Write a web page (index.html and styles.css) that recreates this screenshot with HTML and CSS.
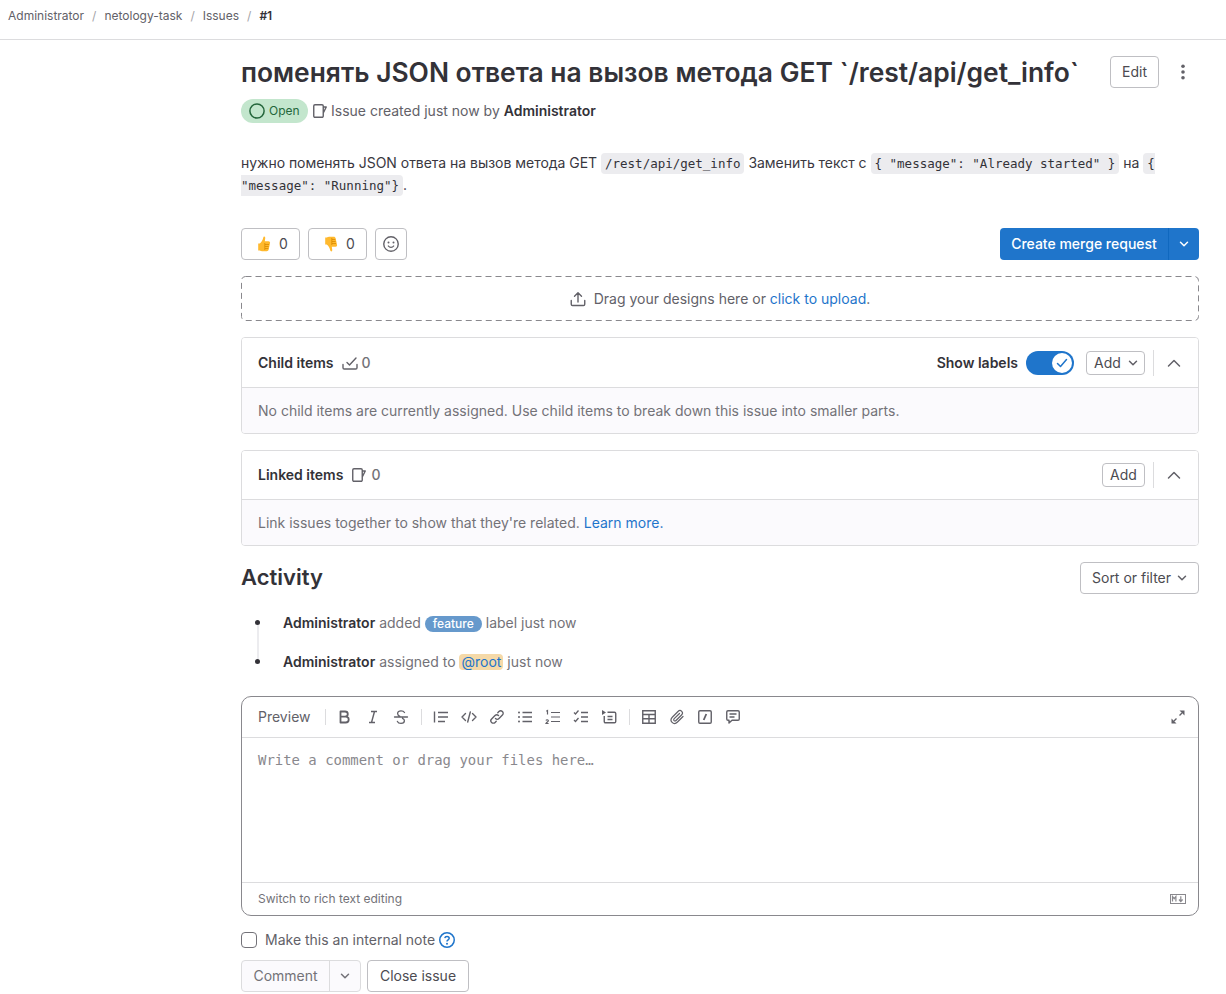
FILE: index.html
```html
<!DOCTYPE html>
<html lang="en">
<head>
  <meta charset="UTF-8">
  <title>#1 - netology-task</title>
  <link rel="stylesheet" href="styles.css">
</head>
<body>

  <svg class="sprite" width="0" height="0">
    <symbol id="i-issue" viewBox="0 0 16 16"><path d="M3 1.75h7a1.25 1.25 0 0 1 1.25 1.25v10A1.25 1.25 0 0 1 10 14.250H3A1.250 1.250 0 0 1 1.750 13V3A1.250 1.250 0 0 1 3 1.750zM11.250 4h3l-3 6" fill="none" stroke="currentColor" stroke-width="1.4" stroke-linejoin="round"/></symbol>
    <symbol id="i-chevron" viewBox="0 0 16 16"><path d="M4.500 6.250 8 9.750l3.500-3.500" fill="none" stroke="currentColor" stroke-width="1.5" stroke-linecap="round" stroke-linejoin="round"/></symbol>
    <symbol id="i-up" viewBox="0 0 16 16"><path d="M2.5 11 8 5.5l5.5 5.5" fill="none" stroke="currentColor" stroke-width="1.5" stroke-linecap="round" stroke-linejoin="round"/></symbol>
  </svg>

  <nav class="crumbs">
    <a>Administrator</a><span class="sep">/</span>
    <a>netology-task</a><span class="sep">/</span>
    <a>Issues</a><span class="sep">/</span>
    <strong>#1</strong>
  </nav>

  <main class="content">
    <div class="title-row">
      <h1>поменять JSON ответа на вызов метода GET `/rest/api/get_info`</h1>
      <button class="btn edit-btn">Edit</button>
      <svg class="kebab" width="16" height="16" viewBox="0 0 16 16"><circle cx="8" cy="2.2" r="1.8"/><circle cx="8" cy="8" r="1.8"/><circle cx="8" cy="13.8" r="1.8"/></svg>
    </div>

    <div class="meta">
      <span class="status">
        <svg width="16" height="16" viewBox="0 0 16 16"><circle cx="8" cy="8" r="7.1" fill="none" stroke="currentColor" stroke-width="1.5"/></svg>
        <span class="raised">Open</span>
      </span>
      <svg class="icon issue-icon" width="16" height="16"><use href="#i-issue"/></svg>
      <span class="raised">Issue created just now by <strong>Administrator</strong></span>
    </div>

    <p class="description">нужно поменять JSON ответа на вызов метода GET <code>/rest/api/get_info</code> Заменить текст с <code>{ "message": "Already started" }</code> на <code>{ "message": "Running"}</code>.</p>

    <div class="actions">
      <button class="btn emoji-btn">
        <svg width="16" height="16" viewBox="0 0 16 16"><path d="M8.2.6c1 .1 1.2 1.1 1 2L8.8 5.3h3.700c1.300 0 1.800 1 1.500 2l-1.300 6.300c-.3 1-1 1.700-2 1.700H6.200c-1 0-1.700-.3-2.400-.8H2.200V7.400h1.500c1.600-1.200 3.200-3.600 3.600-6 .1-.5.4-.8.9-.8z" fill="#ffb92e"/><path d="M9 8.500h4M9 10.500h3.600M9 12.500h3.200M8.800 7v7" fill="none" stroke="#d98a00" stroke-width=".8"/></svg>
        0
      </button>
      <button class="btn emoji-btn">
        <svg width="16" height="16" viewBox="0 0 16 16"><path d="M8.2 15.400c1-.1 1.200-1.100 1-2l-.4-2.700h3.700c1.300 0 1.800-1 1.500-2l-1.300-6.300c-.3-1-1-1.700-2-1.700H6.200c-1 0-1.700.3-2.400.8H2.200v7.100h1.500c1.600 1.200 3.200 3.600 3.600 6 .1.500.4.800.9.800z" fill="#ffb92e"/><path d="M9 7.500h4M9 5.500h3.600M9 3.500h3.200M8.800 9V2" fill="none" stroke="#d98a00" stroke-width=".8"/></svg>
        0
      </button>
      <button class="btn smile-btn">
        <svg class="icon" width="16" height="16" viewBox="0 0 16 16"><circle cx="8" cy="8" r="7.25" fill="none" stroke="currentColor" stroke-width="1.4"/><circle cx="5.500" cy="6.500" r="1" fill="currentColor"/><circle cx="10.500" cy="6.500" r="1" fill="currentColor"/><path d="M5.300 10c.7 1 1.600 1.400 2.700 1.400s2-.4 2.700-1.400" fill="none" stroke="currentColor" stroke-width="1.300" stroke-linecap="round"/></svg>
      </button>
      <div class="split-primary">
        <span class="split-main">Create merge request</span>
        <span class="split-caret"><svg width="16" height="16"><use href="#i-chevron"/></svg></span>
      </div>
    </div>

    <div class="dropzone">
      <svg class="dash" width="958" height="45"><rect x=".5" y=".5" width="957" height="44" rx="4" fill="none" stroke="#89888d" stroke-dasharray="6 4"/></svg>
      <svg class="icon" width="16" height="16" viewBox="0 0 16 16"><path d="M8 11V2M4.500 5.250 8 1.750l3.500 3.500M1.250 9.500v3.750c0 .8.500 1.250 1.250 1.250h11c.8 0 1.250-.45 1.250-1.250V9.500" fill="none" stroke="currentColor" stroke-width="1.400" stroke-linecap="round" stroke-linejoin="round"/></svg>
      <span>Drag your designs here or <a class="link">click to upload</a>.</span>
    </div>

    <section class="card">
      <header class="card-head child-head">
        <strong>Child items</strong>
        <span class="count">
          <svg class="icon" width="16" height="16" viewBox="0 0 16 16"><path d="M1 9.500v3.250c0 .7.500 1.250 1.250 1.250h11.500c.7 0 1.250-.55 1.250-1.250V9.500M5 7.500l2.500 2.500L14 3" fill="none" stroke="currentColor" stroke-width="1.400" stroke-linecap="round" stroke-linejoin="round"/></svg>
          0
        </span>
        <strong class="toggle-label">Show labels</strong>
        <span class="toggle">
          <span class="knob"><svg width="12" height="12" viewBox="0 0 12 12"><path d="M1.500 6.500 4.500 9.500 10.500 2.500" fill="none" stroke="#1f75cb" stroke-width="1.500" stroke-linecap="round" stroke-linejoin="round"/></svg></span>
        </span>
        <button class="btn small-btn add-drop">Add <svg class="icon" width="16" height="16"><use href="#i-chevron"/></svg></button>
        <span class="divider"></span>
        <svg class="icon" width="16" height="16"><use href="#i-up"/></svg>
      </header>
      <div class="card-body">No child items are currently assigned. Use child items to break down this issue into smaller parts.</div>
    </section>

    <section class="card">
      <header class="card-head linked-head">
        <strong>Linked items</strong>
        <span class="count">
          <svg class="icon" width="16" height="16"><use href="#i-issue"/></svg>
          0
        </span>
        <button class="btn small-btn linked-add">Add</button>
        <span class="divider"></span>
        <svg class="icon" width="16" height="16"><use href="#i-up"/></svg>
      </header>
      <div class="card-body">Link issues together to show that they're related. <a class="link">Learn more.</a></div>
    </section>

    <div class="activity-head">
      <h2>Activity</h2>
      <button class="btn sort-btn">Sort or filter <svg class="icon" width="16" height="16"><use href="#i-chevron"/></svg></button>
    </div>

    <ul class="timeline">
      <li><strong>Administrator</strong> added <span class="label">feature</span> label just now</li>
      <li><strong>Administrator</strong> assigned to <span class="mention">@root</span> just now</li>
    </ul>

    <div class="editor">
      <div class="toolbar">
        <span class="preview">Preview</span>
        <span class="tool-sep"></span>
        <svg class="tool" width="16" height="16" viewBox="0 0 16 16"><path d="M3.500 2.500h4.500c1.700 0 2.800 1 2.800 2.500s-1.100 2.700-2.800 2.700H3.500zM3.500 7.700h5.200c1.800 0 3 1.100 3 2.800s-1.200 3-3 3H3.500z" fill="none" stroke="currentColor" stroke-width="1.800" stroke-linejoin="round"/></svg>
        <svg class="tool" width="16" height="16" viewBox="0 0 16 16"><path d="M6 2.500h6M4 13.500h6M9.500 2.500l-3 11" fill="none" stroke="currentColor" stroke-width="1.400"/></svg>
        <svg class="tool" width="16" height="16" viewBox="0 0 16 16"><path d="M11.500 3.500C10.800 2.300 9.500 1.800 8 1.800c-1.900 0-3.400 1-3.400 2.700 0 1.400 1 2.200 2.200 2.800M1.500 8h13M9.500 9.300c1.200.6 1.900 1.300 1.900 2.400 0 1.600-1.500 2.600-3.400 2.600-1.600 0-3-.6-3.600-1.900" fill="none" stroke="currentColor" stroke-width="1.300" stroke-linecap="round"/></svg>
        <span class="tool-sep"></span>
        <svg class="tool" width="16" height="16" viewBox="0 0 16 16"><path d="M1.500 2.500v11M5 3.500h10M5 8h10M5 12.500h7" fill="none" stroke="currentColor" stroke-width="1.400"/></svg>
        <svg class="tool" width="16" height="16" viewBox="0 0 16 16"><path d="M4.500 4.500 1 8l3.500 3.500M11.500 4.500 15 8l-3.500 3.500M9.300 3 6.700 13" fill="none" stroke="currentColor" stroke-width="1.400" stroke-linecap="round" stroke-linejoin="round"/></svg>
        <svg class="tool" width="16" height="16" viewBox="0 0 16 16"><path d="M6.500 9.500c1 1 2.500 1 3.500 0l3.400-3.400c1-1 1-2.500 0-3.500s-2.500-1-3.500 0L8.800 3.700M9.500 6.500c-1-1-2.500-1-3.500 0L2.600 9.900c-1 1-1 2.500 0 3.500s2.500 1 3.500 0l1.100-1.100" fill="none" stroke="currentColor" stroke-width="1.400" stroke-linecap="round"/></svg>
        <svg class="tool" width="16" height="16" viewBox="0 0 16 16"><path d="M5.500 3.500H15M5.500 8H15M5.500 12.500H15" fill="none" stroke="currentColor" stroke-width="1.400"/><circle cx="2" cy="3.500" r="1" fill="currentColor"/><circle cx="2" cy="8" r="1" fill="currentColor"/><circle cx="2" cy="12.500" r="1" fill="currentColor"/></svg>
        <svg class="tool" width="16" height="16" viewBox="0 0 16 16"><path d="M6 3.500h9M6 8h9M6 12.500h9M1.300 2.300l1.200-.8v4M1 11.500c.3-1 2.400-1 2.400.2 0 1-1.700 1.500-2.400 2.800h2.600" fill="none" stroke="currentColor" stroke-width="1.200"/></svg>
        <svg class="tool" width="16" height="16" viewBox="0 0 16 16"><path d="M8 3.500h7M8 8h7M8 12.500h7M1 3.500l1.500 1.500 3-3.500M1 11l1.500 1.500 3-3.500" fill="none" stroke="currentColor" stroke-width="1.300"/></svg>
        <svg class="tool" width="16" height="16" viewBox="0 0 16 16"><path d="M1 1v5l4-2.500z" fill="currentColor"/><path d="M6.500 3.250h7c.8 0 1.250.45 1.250 1.250v8c0 .8-.45 1.250-1.250 1.250h-9c-.8 0-1.250-.45-1.250-1.250V7M6.500 7.500h5M6.500 10.500h5" fill="none" stroke="currentColor" stroke-width="1.400"/></svg>
        <span class="tool-sep"></span>
        <svg class="tool" width="16" height="16" viewBox="0 0 16 16"><path d="M1.750 1.750h12.500v12.500H1.750zM1.750 5.500h12.500M1.750 9.800h12.500M8 5.500v8.700" fill="none" stroke="currentColor" stroke-width="1.400"/></svg>
        <svg class="tool" width="16" height="16" viewBox="0 0 16 16"><path d="M14 7.500 8.500 13c-1.700 1.700-4 1.800-5.400.4S1.800 9.700 3.500 8L9 2.500c1.100-1.100 2.700-1.200 3.700-.2s.9 2.600-.2 3.700L7 11.500c-.6.600-1.400.6-1.900.1s-.5-1.300.1-1.900L10.500 4.500" fill="none" stroke="currentColor" stroke-width="1.200" stroke-linecap="round"/></svg>
        <svg class="tool" width="16" height="16" viewBox="0 0 16 16"><path d="M3 1.750h10c.8 0 1.250.45 1.250 1.250v10c0 .8-.45 1.250-1.250 1.250H3c-.8 0-1.250-.45-1.250-1.250V3c0-.8.45-1.250 1.250-1.250z" fill="none" stroke="currentColor" stroke-width="1.400"/><path d="M9.300 5 6.700 11" fill="none" stroke="currentColor" stroke-width="1.800"/></svg>
        <svg class="tool" width="16" height="16" viewBox="0 0 16 16"><path d="M3 1.750h10c.8 0 1.250.45 1.250 1.250v7c0 .8-.45 1.250-1.250 1.250H7L4 14v-2.750H3c-.8 0-1.250-.45-1.250-1.250V3c0-.8.45-1.250 1.250-1.250zM4.500 5h7M4.500 8h5" fill="none" stroke="currentColor" stroke-width="1.400" stroke-linejoin="round"/></svg>
        <svg class="tool fullscreen" width="16" height="16" viewBox="0 0 16 16"><path d="M9.500 1.500H14.500V6.500z" fill="currentColor"/><path d="M6.500 14.500H1.500V9.500z" fill="currentColor"/><path d="M12 4 9.500 6.500M4 12l2.500-2.500" fill="none" stroke="currentColor" stroke-width="1.400"/></svg>
      </div>
      <div class="write-area">Write a comment or drag your files here…</div>
      <div class="editor-foot">
        <span>Switch to rich text editing</span>
        <svg class="md-icon" width="16" height="10" viewBox="0 0 16 10"><rect x=".5" y=".5" width="15" height="9" fill="none" stroke="currentColor"/><path d="M2.500 7.500v-5l1.700 2.200 1.700-2.200v5M10.800 2.200V7M9 5.500l1.800 2 1.800-2" fill="none" stroke="currentColor" stroke-width="1.200"/></svg>
      </div>
    </div>

    <label class="internal">
      <span class="checkbox"></span>
      Make this an internal note
      <svg class="help" width="16" height="16" viewBox="0 0 16 16"><circle cx="8" cy="8" r="7.25" fill="none" stroke="currentColor" stroke-width="1.5"/><path d="M5.800 6.200C6 5 6.900 4.400 8 4.400c1.200 0 2.200.8 2.200 1.900 0 1.500-2.200 1.600-2.200 3.200" fill="none" stroke="currentColor" stroke-width="1.500"/><circle cx="8" cy="11.700" r="1" fill="currentColor"/></svg>
    </label>

    <div class="submit-row">
      <div class="split-disabled">
        <span class="comment-main">Comment</span>
        <span class="comment-caret"><svg width="16" height="16"><use href="#i-chevron"/></svg></span>
      </div>
      <button class="btn close-btn">Close issue</button>
    </div>
  </main>

</body>
</html>
```

FILE: styles.css
```css
body {
  margin: 0;
  font-family: Inter, "Noto Sans", sans-serif;
  font-size: 14px;
  color: #737278;
  background-color: #fff;
}
strong {
  font-weight: 600;
  color: #333238;
}
.sprite {
  position: absolute;
}
.icon {
  color: #626168;
  flex: none;
}
.link {
  color: #1f75cb;
}

/* breadcrumbs */
.crumbs {
  height: 31px;
  padding: 0 0 8px 8px;
  display: flex;
  align-items: center;
  font-size: 12px;
  color: #626168;
  border-bottom: 1px solid #dcdcde;
}
.crumbs a {
  color: #626168;
}
.crumbs .sep {
  color: #a4a3a8;
  margin: 0 8px;
}
.crumbs strong {
  color: #333238;
}

.content {
  width: 958px;
  margin-left: 241px;
}

.btn {
  font-family: inherit;
  font-size: 14px;
  line-height: 16px;
  color: #4c4b51;
  background: #fff;
  border: 1px solid #bfbfc3;
  border-radius: 4px;
  height: 32px;
  padding: 0 12px;
  display: inline-flex;
  align-items: center;
  justify-content: center;
  box-sizing: border-box;
}

/* title */
.title-row {
  display: flex;
  align-items: flex-start;
  padding-top: 16px;
}
h1 {
  flex: 1;
  min-width: 0;
  margin: 0;
  font-size: 26.4px;
  font-weight: 600;
  line-height: 32px;
  color: #333238;
  white-space: nowrap;
}
.edit-btn {
  width: 49px;
  margin-right: 16px;
}
.kebab {
  fill: #626168;
  margin: 8px 8px 0 0;
}

.meta {
  display: flex;
  align-items: center;
  height: 24px;
  margin-top: 11px;
  color: #626168;
}
.raised {
  padding-bottom: 2px;
}
.status {
  display: inline-flex;
  align-items: center;
  gap: 4px;
  height: 24px;
  width: 67px;
  padding-left: 8px;
  box-sizing: border-box;
  border-radius: 12px;
  background: #c3e6cd;
  color: #24663b;
  font-size: 12px;
}
.issue-icon {
  margin: 0 3px 0 4px;
}

.description {
  margin: 29px 0 0;
  line-height: 21.5px;
  color: #3a383f;
  width: 930px;
  letter-spacing: -0.03px;
}
code {
  font-family: "DejaVu Sans Mono", monospace;
  font-size: 12.5px;
  line-height: 14px;
  letter-spacing: 0;
  background: #ececef;
  color: #333238;
  padding: 3px 4px;
  border-radius: 4px;
}

/* emoji row */
.actions {
  display: flex;
  align-items: center;
  gap: 8px;
  margin-top: 33px;
}
.emoji-btn {
  width: 59px;
  justify-content: flex-start;
  gap: 7px;
  padding: 0 0 0 14px;
}
.smile-btn {
  width: 32px;
  padding: 0;
}
.split-primary {
  margin-left: auto;
  display: flex;
  height: 32px;
  width: 199px;
  border-radius: 4px;
  background: #1f75cb;
  color: #fff;
  font-weight: 500;
  line-height: 16px;
}
.split-main {
  flex: 1;
  display: flex;
  align-items: center;
  justify-content: center;
  border-right: 1px solid #1068bf;
}
.split-caret {
  width: 30px;
  display: flex;
  align-items: center;
  justify-content: center;
}

.dropzone {
  position: relative;
  margin-top: 16px;
  height: 45px;
  display: flex;
  align-items: center;
  justify-content: center;
  gap: 8px;
  color: #626168;
}
.dash {
  position: absolute;
  left: 0;
  top: 0;
}

/* cards */
.card {
  margin-top: 16px;
  border: 1px solid #dcdcde;
  border-radius: 4px;
  overflow: hidden;
}
.card-head {
  display: flex;
  align-items: center;
  box-sizing: border-box;
  padding: 0 16px;
  border-bottom: 1px solid #dcdcde;
  background: #fff;
  line-height: 16px;
}
.child-head {
  height: 50px;
}
.linked-head {
  height: 49px;
}
.card-body {
  height: 45px;
  display: flex;
  align-items: center;
  gap: 4px;
  padding: 0 16px;
  background: #fbfafd;
  color: #737278;
}
.count {
  display: inline-flex;
  align-items: center;
  gap: 4px;
  margin-left: 8px;
  color: #737278;
  font-weight: 500;
}
.toggle-label {
  margin-left: auto;
}
.toggle {
  width: 48px;
  height: 24px;
  margin-left: 8px;
  border-radius: 12px;
  background: #1f75cb;
  display: flex;
  align-items: center;
  justify-content: flex-end;
  padding-right: 1px;
  box-sizing: border-box;
}
.knob {
  width: 20px;
  height: 20px;
  margin-right: 1px;
  border-radius: 50%;
  background: #fff;
  display: flex;
  align-items: center;
  justify-content: center;
}
.small-btn {
  height: 24px;
  padding: 0;
}
.add-drop {
  width: 59px;
  padding-left: 7px;
  justify-content: flex-start;
  gap: 4px;
  margin-left: 12px;
}
.linked-add {
  width: 43px;
  margin-left: auto;
}
.divider {
  width: 1px;
  height: 26px;
  margin: 0 12px 0 8px;
  background: #dcdcde;
}

/* activity */
.activity-head {
  display: flex;
  align-items: center;
  justify-content: space-between;
  margin-top: 16px;
  height: 32px;
}
h2 {
  margin: 0 0 2px;
  font-size: 22px;
  font-weight: 600;
  color: #333238;
}
.sort-btn {
  width: 119px;
  justify-content: flex-start;
  gap: 3px;
  padding: 0 0 0 11px;
}
.timeline {
  list-style: none;
  margin: 9px 0 0;
  padding: 0 0 0 42px;
}
.timeline li {
  height: 39px;
  line-height: 39px;
  position: relative;
  color: #737278;
}
.timeline li::before {
  content: "";
  position: absolute;
  left: -28px;
  top: 17px;
  width: 5px;
  height: 5px;
  border-radius: 50%;
  background: #333238;
}
.timeline li:first-child::after {
  content: "";
  position: absolute;
  left: -26px;
  top: 22px;
  width: 2px;
  height: 34px;
  background: #ececef;
}
.label {
  display: inline-block;
  background: #6699cc;
  color: #fff;
  font-size: 12px;
  font-weight: 500;
  line-height: 16px;
  padding: 0 8px;
  border-radius: 8px;
}
.mention {
  display: inline-block;
  background: #f5d9a8;
  color: #1f75cb;
  padding: 0 2px;
  border-radius: 4px;
  line-height: 16px;
}

/* comment editor */
.editor {
  margin-top: 15px;
  height: 220px;
  box-sizing: border-box;
  border: 1px solid #89888d;
  border-radius: 10px;
  display: flex;
  flex-direction: column;
}
.toolbar {
  height: 41px;
  box-sizing: border-box;
  border-bottom: 1px solid #dcdcde;
  display: flex;
  align-items: center;
  padding: 0 12px 0 16px;
  gap: 12px;
  color: #626168;
  line-height: 16px;
}
.preview {
  margin-right: 2px;
}
.tool-sep {
  width: 1px;
  height: 16px;
  background: #dcdcde;
  margin-right: -1px;
}
.tool {
  flex: none;
  color: #626168;
}
.fullscreen {
  margin-left: auto;
}
.write-area {
  flex: 1;
  padding: 14px 16px;
  font-family: "DejaVu Sans Mono", monospace;
  font-size: 13.95px;
  line-height: 17px;
  color: #89888d;
}
.editor-foot {
  height: 33px;
  box-sizing: border-box;
  border-top: 1px solid #dcdcde;
  display: flex;
  align-items: center;
  justify-content: space-between;
  padding: 0 12px 0 16px;
  font-size: 12px;
  line-height: 14px;
  color: #737278;
}
.md-icon {
  color: #89888d;
}

.internal {
  display: flex;
  align-items: center;
  margin-top: 16px;
  height: 16px;
  line-height: 16px;
  color: #626168;
}
.checkbox {
  width: 16px;
  height: 16px;
  box-sizing: border-box;
  border: 1px solid #737278;
  border-radius: 4px;
  margin-right: 8px;
}
.help {
  color: #1f75cb;
  margin-left: 4px;
}

.submit-row {
  display: flex;
  gap: 6px;
  margin-top: 12px;
}
.split-disabled {
  display: flex;
  height: 32px;
  box-sizing: border-box;
  border: 1px solid #dcdcde;
  border-radius: 4px;
  background: #fbfafd;
  color: #737278;
  line-height: 16px;
}
.comment-main {
  width: 87px;
  display: flex;
  align-items: center;
  justify-content: center;
  border-right: 1px solid #dcdcde;
}
.comment-caret {
  width: 30px;
  display: flex;
  align-items: center;
  justify-content: center;
}
.close-btn {
  width: 102px;
  padding: 0;
}
```
